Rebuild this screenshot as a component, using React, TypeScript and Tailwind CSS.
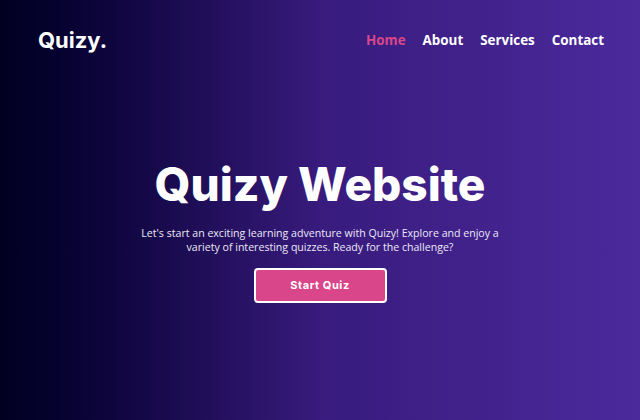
export default function App() {
  return (
    <div className="w-[640px] h-[420px] overflow-hidden bg-gradient-to-r from-[#010020] via-[#381b7d] to-[#4b2a9c] flex flex-col text-white">
      <nav className="h-[80px] pl-[38px] pr-[36px] flex items-center justify-between">
        <div className="text-[22px] font-bold font-['Inter','Noto_Sans',sans-serif]">Quizy.</div>
        <ul className="flex gap-[17px] text-[13.4px] font-bold font-['Open_Sans',sans-serif]">
          <li className="text-[#d9468a]">Home</li>
          <li>About</li>
          <li>Services</li>
          <li>Contact</li>
        </ul>
      </nav>
      <main className="flex flex-col items-center pt-[79px]">
        <h1 className="text-[46px] leading-[50px] font-extrabold font-['Inter','Noto_Sans',sans-serif]">Quizy Website</h1>
        <p className="mt-[17px] text-[10.6px] leading-[14px] text-center w-[370px] text-[#ece8f5] font-['Open_Sans',sans-serif]">
          Let's start an exciting learning adventure with Quizy! Explore and enjoy a variety of interesting quizzes. Ready for the challenge?
        </p>
        <button className="mt-[14px] w-[133px] h-[35px] rounded-[4px] border-2 border-white bg-[#d9468a] text-[11px] font-bold tracking-[0.6px] font-['Inter','Noto_Sans',sans-serif]">
          Start Quiz
        </button>
      </main>
    </div>
  );
}
